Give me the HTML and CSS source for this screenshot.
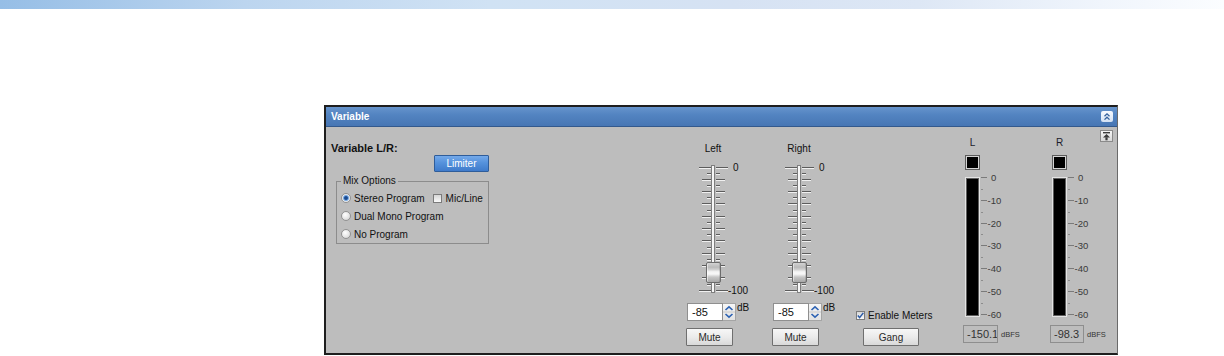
FILE: index.html
```html
<!DOCTYPE html>
<html>
<head>
<meta charset="utf-8">
<title>Variable</title>
<link rel="stylesheet" href="styles.css">
</head>
<body>
<div class="topbar"></div>
<div class="panel">
  <div class="panel-head">
    <span class="panel-title">Variable</span>
    <span class="collapse-btn">
      <svg width="10" height="9" viewBox="0 0 10 9"><polyline points="2.5,4.2 5,1.8 7.5,4.2" fill="none" stroke="#34609c" stroke-width="1.3"/><polyline points="2.5,7.6 5,5.2 7.5,7.6" fill="none" stroke="#34609c" stroke-width="1.3"/></svg>
    </span>
  </div>
  <div class="panel-body">
    <div class="col-left">
      <div class="section-title">Variable L/R:</div>
      <button class="btn-blue">Limiter</button>
      <fieldset class="mix">
        <legend>Mix Options</legend>
        <div class="opt"><span class="radio on"></span><span>Stereo Program</span><span class="check"></span><span>Mic/Line</span></div>
        <div class="opt"><span class="radio"></span><span>Dual Mono Program</span></div>
        <div class="opt"><span class="radio"></span><span>No Program</span></div>
      </fieldset>
    </div>

    <div class="fader fader-left">
      <div class="fader-label">Left</div>
      <div class="fader-scale">
        <svg class="scale-svg" width="66" height="136" viewBox="0 0 66 136">
          <path d="M13 7.5H25M30 7.5H42M21 13.5H25M30 13.5H34M16 19.5H25M30 19.5H39M21 25.5H25M30 25.5H34M16 31.5H25M30 31.5H39M21 37.5H25M30 37.5H34M16 43.5H25M30 43.5H39M21 50.5H25M30 50.5H34M16 56.5H25M30 56.5H39M21 62.5H25M30 62.5H34M16 68.5H25M30 68.5H39M21 74.5H25M30 74.5H34M16 80.5H25M30 80.5H39M21 87.5H25M30 87.5H34M16 93.5H25M30 93.5H39M21 99.5H25M30 99.5H34M16 105.5H25M30 105.5H39M21 111.5H25M30 111.5H34M16 117.5H25M30 117.5H39M21 124.5H25M30 124.5H34M13 130.5H25M30 130.5H42" stroke="#f0f0f0" transform="translate(0 1)"/>
          <path d="M13 7.5H25M30 7.5H42M21 13.5H25M30 13.5H34M16 19.5H25M30 19.5H39M21 25.5H25M30 25.5H34M16 31.5H25M30 31.5H39M21 37.5H25M30 37.5H34M16 43.5H25M30 43.5H39M21 50.5H25M30 50.5H34M16 56.5H25M30 56.5H39M21 62.5H25M30 62.5H34M16 68.5H25M30 68.5H39M21 74.5H25M30 74.5H34M16 80.5H25M30 80.5H39M21 87.5H25M30 87.5H34M16 93.5H25M30 93.5H39M21 99.5H25M30 99.5H34M16 105.5H25M30 105.5H39M21 111.5H25M30 111.5H34M16 117.5H25M30 117.5H39M21 124.5H25M30 124.5H34M13 130.5H25M30 130.5H42" stroke="#5c5c5c"/>
          <rect x="25.5" y="5.5" width="3" height="127" fill="#f7f7f7" stroke="#7e7e7e"/>
          <text class="scale-num" x="47" y="11">0</text>
          <text class="scale-num" x="42" y="134">-100</text>
        </svg>
        <div class="thumb" style="top:102px"></div>
      </div>
      <div class="spin-row">
        <div class="spin">
          <span class="spin-val">-85</span>
          <span class="spin-btns">
            <svg width="12" height="16" viewBox="0 0 12 16"><polyline points="2.5,6 6,2.8 9.5,6" fill="none" stroke="#2d62b3" stroke-width="1.6"/><polyline points="2.5,10 6,13.2 9.5,10" fill="none" stroke="#2d62b3" stroke-width="1.6"/><path d="M0 8H12" stroke="#c8c8c8"/></svg>
          </span>
        </div>
        <span class="unit">dB</span>
      </div>
      <button class="btn btn-mute">Mute</button>
    </div>

    <div class="fader fader-right">
      <div class="fader-label">Right</div>
      <div class="fader-scale">
        <svg class="scale-svg" width="66" height="136" viewBox="0 0 66 136">
          <path d="M13 7.5H25M30 7.5H42M21 13.5H25M30 13.5H34M16 19.5H25M30 19.5H39M21 25.5H25M30 25.5H34M16 31.5H25M30 31.5H39M21 37.5H25M30 37.5H34M16 43.5H25M30 43.5H39M21 50.5H25M30 50.5H34M16 56.5H25M30 56.5H39M21 62.5H25M30 62.5H34M16 68.5H25M30 68.5H39M21 74.5H25M30 74.5H34M16 80.5H25M30 80.5H39M21 87.5H25M30 87.5H34M16 93.5H25M30 93.5H39M21 99.5H25M30 99.5H34M16 105.5H25M30 105.5H39M21 111.5H25M30 111.5H34M16 117.5H25M30 117.5H39M21 124.5H25M30 124.5H34M13 130.5H25M30 130.5H42" stroke="#f0f0f0" transform="translate(0 1)"/>
          <path d="M13 7.5H25M30 7.5H42M21 13.5H25M30 13.5H34M16 19.5H25M30 19.5H39M21 25.5H25M30 25.5H34M16 31.5H25M30 31.5H39M21 37.5H25M30 37.5H34M16 43.5H25M30 43.5H39M21 50.5H25M30 50.5H34M16 56.5H25M30 56.5H39M21 62.5H25M30 62.5H34M16 68.5H25M30 68.5H39M21 74.5H25M30 74.5H34M16 80.5H25M30 80.5H39M21 87.5H25M30 87.5H34M16 93.5H25M30 93.5H39M21 99.5H25M30 99.5H34M16 105.5H25M30 105.5H39M21 111.5H25M30 111.5H34M16 117.5H25M30 117.5H39M21 124.5H25M30 124.5H34M13 130.5H25M30 130.5H42" stroke="#5c5c5c"/>
          <rect x="25.5" y="5.5" width="3" height="127" fill="#f7f7f7" stroke="#7e7e7e"/>
          <text class="scale-num" x="47" y="11">0</text>
          <text class="scale-num" x="42" y="134">-100</text>
        </svg>
        <div class="thumb" style="top:102px"></div>
      </div>
      <div class="spin-row">
        <div class="spin">
          <span class="spin-val">-85</span>
          <span class="spin-btns">
            <svg width="12" height="16" viewBox="0 0 12 16"><polyline points="2.5,6 6,2.8 9.5,6" fill="none" stroke="#2d62b3" stroke-width="1.6"/><polyline points="2.5,10 6,13.2 9.5,10" fill="none" stroke="#2d62b3" stroke-width="1.6"/><path d="M0 8H12" stroke="#c8c8c8"/></svg>
          </span>
        </div>
        <span class="unit">dB</span>
      </div>
      <button class="btn btn-mute">Mute</button>
    </div>

    <div class="col-options">
      <div class="enable">
        <span class="check checked"><svg width="7" height="7" viewBox="0 0 7 7"><polyline points="0.8,3.6 2.6,5.6 6.3,0.9" fill="none" stroke="#2b5aa6" stroke-width="1.5"/></svg></span>
        <span class="enable-text">Enable Meters</span>
      </div>
      <button class="btn btn-gang">Gang</button>
    </div>

    <div class="meter meter-l">
      <div class="meter-label">L</div>
      <div class="meter-led"></div>
      <svg class="meter-svg" width="80" height="150" viewBox="0 0 80 150">
        <rect x="2" y="5" width="15" height="140" fill="#e4e4e4"/>
        <rect x="3" y="6" width="13" height="138" fill="#5e5e5e"/>
        <rect x="4" y="7" width="11" height="136" fill="#000"/>
        <path d="M18 5.5H24M18 28.5H24M18 51.5H24M18 73.5H24M18 96.5H24M18 119.5H24M18 142.5H24" stroke="#7a7a7a"/>
        <path d="M18 17.5H20M18 40.5H20M18 62.5H20M18 85.5H20M18 108.5H20M18 131.5H20" stroke="#8c8c8c"/>
        <text class="meter-num" x="28" y="9">0</text>
        <text class="meter-num" x="24.5" y="32">-10</text>
        <text class="meter-num" x="24.5" y="55">-20</text>
        <text class="meter-num" x="24.5" y="77">-30</text>
        <text class="meter-num" x="24.5" y="100">-40</text>
        <text class="meter-num" x="24.5" y="123">-50</text>
        <text class="meter-num" x="24.5" y="146">-60</text>
      </svg>
      <div class="readout-row">
        <div class="readout">-150.1</div>
        <span class="dbfs">dBFS</span>
      </div>
    </div>

    <div class="meter meter-r">
      <div class="meter-label">R</div>
      <div class="meter-led"></div>
      <svg class="meter-svg" width="80" height="150" viewBox="0 0 80 150">
        <rect x="2" y="5" width="15" height="140" fill="#e4e4e4"/>
        <rect x="3" y="6" width="13" height="138" fill="#5e5e5e"/>
        <rect x="4" y="7" width="11" height="136" fill="#000"/>
        <path d="M18 5.5H24M18 28.5H24M18 51.5H24M18 73.5H24M18 96.5H24M18 119.5H24M18 142.5H24" stroke="#7a7a7a"/>
        <path d="M18 17.5H20M18 40.5H20M18 62.5H20M18 85.5H20M18 108.5H20M18 131.5H20" stroke="#8c8c8c"/>
        <text class="meter-num" x="28" y="9">0</text>
        <text class="meter-num" x="24.5" y="32">-10</text>
        <text class="meter-num" x="24.5" y="55">-20</text>
        <text class="meter-num" x="24.5" y="77">-30</text>
        <text class="meter-num" x="24.5" y="100">-40</text>
        <text class="meter-num" x="24.5" y="123">-50</text>
        <text class="meter-num" x="24.5" y="146">-60</text>
      </svg>
      <div class="readout-row">
        <div class="readout readout-r">-98.3</div>
        <span class="dbfs">dBFS</span>
      </div>
    </div>

    <div class="col-corner">
      <span class="corner-btn">
        <svg width="11" height="10" viewBox="0 0 11 10"><rect x="2" y="1" width="7" height="1.4" fill="#3c3c3c"/><polygon points="5.5,3 2,6.5 9,6.5" fill="#3c3c3c"/><rect x="4.4" y="6.3" width="2.2" height="3" fill="#3c3c3c"/></svg>
      </span>
    </div>
  </div>
</div>
</body>
</html>
```

FILE: styles.css
```css
* { box-sizing: border-box; }

body {
  margin: 0;
  width: 1224px;
  height: 356px;
  overflow: hidden;
  background: #ffffff;
  font-family: "Liberation Sans", Arial, sans-serif;
  font-size: 10px;
  color: #111;
}

.topbar {
  height: 9px;
  background: linear-gradient(90deg, #96bee6 0%, #bcd5ef 20%, #d0e2f4 40%, #d6e2f3 60%, #dde7f5 75%, #f0f5fc 90%, #fbfdff 100%);
}

.panel {
  margin: 96px 0 0 324px;
  width: 794px;
  height: 250px;
  border: 2px solid #1e1e1e;
  border-right: 1px solid #6a6a6a;
  background: #bdbdbd;
}

.panel-head {
  height: 20px;
  display: flex;
  align-items: center;
  justify-content: space-between;
  padding: 0 4px 0 5px;
  background: linear-gradient(#6794cc 0%, #5384c1 40%, #4776b4 100%);
  border-bottom: 1px solid #33598d;
}

.panel-title {
  color: #fff;
  font-weight: bold;
  font-size: 10px;
}

.collapse-btn {
  width: 12px;
  height: 11px;
  display: flex;
  align-items: center;
  justify-content: center;
  border-radius: 2px;
  background: linear-gradient(#f7faff, #d3e1f3);
}

.panel-body {
  display: flex;
  height: 226px;
  padding-left: 5px;
}

.panel-body > * { flex-shrink: 0; }

/* left column */
.col-left {
  width: 158px;
  padding-top: 14px;
}

.section-title {
  font-weight: bold;
  font-size: 11px;
  line-height: 14px;
  color: #111;
}

.btn-blue {
  display: block;
  margin: 0 0 0 103px;
  width: 55px;
  height: 17px;
  padding: 0;
  font-family: inherit;
  font-size: 10px;
  color: #fff;
  border: 1px solid #2f5d9a;
  border-radius: 1px;
  background: linear-gradient(#74a9ea 0%, #5592dc 45%, #3f7bcb 100%);
}

.mix {
  margin: 3px 0 0 5px;
  width: 153px;
  padding: 2px 4px 0 4px;
  border: 1px solid #8c8c8c;
}

.mix legend {
  padding: 0 2px;
  line-height: 12px;
  font-size: 10px;
}

.opt {
  display: flex;
  align-items: center;
  height: 18px;
  white-space: nowrap;
}

.radio {
  width: 10px;
  height: 10px;
  margin-right: 3px;
  border-radius: 50%;
  border: 1px solid #929292;
  background: radial-gradient(circle at 40% 35%, #ffffff 0%, #e6e6e6 55%, #c9c9c9 100%);
}

.radio.on {
  background: radial-gradient(circle, #1b4a8e 0, #1b4a8e 1.4px, #5b93d6 2.2px, #a9c8ec 3px, #efefef 3.6px, #d6d6d6 100%);
}

.check {
  flex-shrink: 0;
  width: 9px;
  height: 9px;
  margin: 0 4px 0 8px;
  border: 1px solid #7b7b7b;
  background: linear-gradient(#d6d6d6, #fafafa);
  display: flex;
  align-items: center;
  justify-content: center;
}

/* faders */
.fader {
  width: 64px;
  padding-top: 16px;
}

.fader-left { margin-left: 197px; }
.fader-right { margin-left: 22px; }

.fader-label {
  width: 54px;
  text-align: center;
  line-height: 12px;
  color: #111;
}

.fader-scale {
  position: relative;
  width: 66px;
  height: 136px;
  margin-top: 5px;
}

.scale-svg { display: block; }

.scale-num {
  font-family: "Liberation Sans", Arial, sans-serif;
  font-size: 10px;
  fill: #111;
}

.thumb {
  position: absolute;
  left: 20px;
  width: 15px;
  height: 21px;
  border: 1px solid #6c6c6c;
  border-radius: 2px;
  background: linear-gradient(#d3d3d3 0%, #bababa 22%, #cfcfcf 34%, #f4f4f4 46%, #f8f8f8 58%, #c6c6c6 74%, #a9a9a9 100%);
  box-shadow: inset 1px 0 0 rgba(255,255,255,.5), inset -1px 0 0 rgba(0,0,0,.12);
}

.spin-row {
  display: flex;
  align-items: flex-start;
  margin: 7px 0 0 1px;
  height: 18px;
}

.spin {
  display: flex;
  width: 49px;
  height: 18px;
  flex-shrink: 0;
}

.spin-val {
  width: 36px;
  height: 18px;
  padding-left: 4px;
  line-height: 16px;
  font-size: 11px;
  color: #111;
  background: #fff;
  border: 1px solid #8f8f8f;
}

.spin-btns {
  width: 13px;
  height: 18px;
  display: flex;
  align-items: center;
  justify-content: center;
  background: linear-gradient(#f6f6f6, #e2e2e2);
  border: 1px solid #a5a5a5;
  border-left: none;
}

.unit {
  margin-left: 1px;
  line-height: 10px;
  font-size: 10px;
}

.btn {
  display: block;
  height: 18px;
  padding: 0;
  font-family: inherit;
  font-size: 10px;
  color: #2a2a2a;
  border: 1px solid #6f6f6f;
  border-radius: 1px;
  background: linear-gradient(#f7f7f7 0%, #ebebeb 50%, #d9d9d9 100%);
}

.btn-mute {
  margin-top: 7px;
  width: 47px;
}

/* options column */
.col-options {
  width: 76px;
  margin-left: 20px;
  padding-top: 182px;
}

.enable {
  display: flex;
  align-items: center;
  height: 12px;
  color: #111;
  white-space: nowrap;
}

.enable .check {
  margin: 0 3px 0 0;
}

.btn-gang {
  margin: 7px 0 0 7px;
  width: 56px;
}

/* meters */
.meter {
  padding-top: 10px;
}

.meter-l { width: 80px; margin-left: 31px; }
.meter-r { width: 50px; margin-left: 7px; }

.meter-label {
  width: 19px;
  text-align: center;
  line-height: 12px;
  color: #1c1c2c;
}

.meter-led {
  width: 15px;
  height: 15px;
  margin: 6px 0 0 2px;
  background: #000;
  border: 1px solid #5c5c5c;
  box-shadow: inset 0 0 0 1px #d4d4d4;
}

.meter-svg {
  display: block;
  margin-top: 2px;
  overflow: visible;
}

.meter-num {
  font-family: "Liberation Sans", Arial, sans-serif;
  font-size: 9.5px;
  fill: #3a3a3a;
}

.readout-row {
  display: flex;
  align-items: center;
  margin-top: 3px;
  height: 18px;
  white-space: nowrap;
}

.readout {
  flex-shrink: 0;
  width: 35px;
  height: 18px;
  padding-left: 3px;
  border: 1px solid #8e8e8e;
  font-size: 11px;
  line-height: 16px;
  color: #333;
  white-space: nowrap;
  overflow: hidden;
}

.readout-r { width: 34px; }

.dbfs {
  flex-shrink: 0;
  margin-left: 3px;
  font-size: 7.5px;
  color: #333;
}

/* corner icon */
.col-corner {
  width: 13px;
  padding-top: 3px;
}

.corner-btn {
  display: flex;
  align-items: center;
  justify-content: center;
  width: 13px;
  height: 12px;
  border: 1px solid #8a8a8a;
  background: linear-gradient(#f6f6f6, #d8d8d8);
}
```
